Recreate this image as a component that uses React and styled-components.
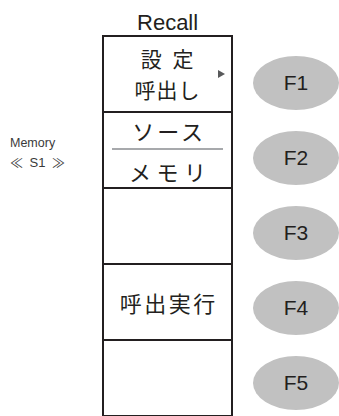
import React from "react";
import styled, { createGlobalStyle } from "styled-components";

const keys = ["F1", "F2", "F3", "F4", "F5"];

function App() {
  return (
    <>
      <GlobalStyle />
      <Page>
        <Aside>
          <SideLabel>Memory</SideLabel>
          <SideValue>≪ S1 ≫</SideValue>
        </Aside>

        <Menu>
          <Title>Recall</Title>
          <Panel>
            <Cell $arrow>
              <Stack>
                <Label $size="21px" $line="31px" $spacing="3px">設 定</Label>
                <Label $size="21px" $line="31px" $spacing="1px">呼出し</Label>
              </Stack>
              <Arrow />
            </Cell>
            <Cell>
              <Stack>
                <Label $spacing="3px">ソース</Label>
                <Divider />
                <Label $spacing="5.5px">メモリ</Label>
              </Stack>
            </Cell>
            <Cell />
            <Cell>
              <Label $spacing="2.5px">呼出実行</Label>
            </Cell>
            <Cell />
          </Panel>
        </Menu>

        <Keys>
          {keys.map((k) => (
            <Key key={k}>{k}</Key>
          ))}
        </Keys>
      </Page>
    </>
  );
}

export default App;

// --- STYLES ---

const GlobalStyle = createGlobalStyle`
  html, body {
    margin: 0;
    padding: 0;
    background: #ffffff;
    overflow: hidden;
  }
  body {
    font-family: "Liberation Sans", "Noto Sans CJK JP", sans-serif;
    color: #231f20;
  }
`;

const Page = styled.div`
  display: flex;
  width: 339px;
  height: 416px;
  overflow: hidden;
`;

const Aside = styled.div`
  width: 93px;
  padding: 133px 0 0 10px;
  display: flex;
  flex-direction: column;
  color: #3a3a3a;
`;

const SideLabel = styled.div`
  font-size: 12.5px;
  line-height: 20px;
`;

const SideValue = styled.div`
  font-size: 13px;
  line-height: 20px;
  word-spacing: 3px;
`;

const Menu = styled.div`
  width: 132px;
  display: flex;
  flex-direction: column;
`;

const Title = styled.div`
  height: 42px;
  box-sizing: border-box;
  padding-top: 11px;
  text-align: center;
  font-size: 22px;
  line-height: 24px;
`;

const Panel = styled.div`
  border: 2px solid #231f20;
  border-bottom: none;
  display: flex;
  flex-direction: column;
`;

const Cell = styled.div`
  height: 74px;
  border-bottom: 2px solid #231f20;
  display: flex;
  align-items: center;
  justify-content: center;
  padding: ${(p) => (p.$arrow ? "0 6px 0 12px" : "0")};
`;

const Stack = styled.div`
  flex: 1;
  display: flex;
  flex-direction: column;
  align-items: center;
  justify-content: center;
`;

const Label = styled.div`
  font-family: "Noto Sans CJK JP", sans-serif;
  font-size: ${(p) => p.$size || "22px"};
  line-height: ${(p) => p.$line || "28px"};
  letter-spacing: ${(p) => p.$spacing || "0"};
  margin-right: ${(p) => (p.$spacing ? `-${p.$spacing}` : "0")};
  white-space: nowrap;
`;

const Divider = styled.div`
  align-self: stretch;
  height: 2px;
  margin: 4px 8px 7px;
  background: #a7a9ac;
`;

const Arrow = styled.div`
  width: 0;
  height: 0;
  border-top: 4px solid transparent;
  border-bottom: 4px solid transparent;
  border-left: 7px solid #58595b;
`;

const Keys = styled.div`
  flex: 1;
  display: flex;
  flex-direction: column;
  align-items: flex-start;
  padding: 56px 0 0 20px;
  gap: 21px;
`;

const Key = styled.div`
  flex: none;
  width: 86px;
  height: 54px;
  border-radius: 50%;
  background: #c1c1c1;
  display: flex;
  align-items: center;
  justify-content: center;
  font-size: 21px;
  color: #231f20;
`;
